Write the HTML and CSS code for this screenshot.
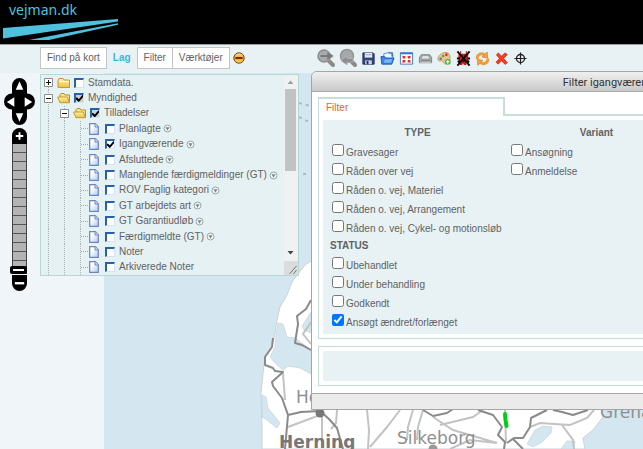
FILE: index.html
```html
<!DOCTYPE html>
<html lang="da">
<head>
<meta charset="utf-8">
<title>vejman.dk</title>
<link rel="stylesheet" href="styles.css">
</head>
<body>
<svg width="0" height="0" class="defs" aria-hidden="true">
  <defs>
    <linearGradient id="gold" x1="0" y1="0" x2="0" y2="1"><stop offset="0" stop-color="#fff3a8"/><stop offset="1" stop-color="#f0c040"/></linearGradient>
    <linearGradient id="page" x1="0" y1="0" x2="1" y2="1"><stop offset="0.3" stop-color="#fff"/><stop offset="1" stop-color="#a9cbf5"/></linearGradient>
    <linearGradient id="amber" x1="0" y1="0" x2="0" y2="1"><stop offset="0" stop-color="#ffe9a0"/><stop offset="0.5" stop-color="#f0a020"/><stop offset="1" stop-color="#ffe070"/></linearGradient>
    <symbol id="folder" viewBox="0 0 14 12"><path d="M1 3.5 2 1.5h4l1 1.5h5.500v7.500H1z" fill="url(#gold)" stroke="#c19a34"/><path d="M2 4.500h10" stroke="#fffbe0"/></symbol>
    <symbol id="folder-open" viewBox="0 0 14 12"><path d="M3 10.500V2.500l1-1h3l1 1.500h4.500v7z" fill="#f8e48c" stroke="#b58d2c"/><path d="M.6 5h9.600l2.300 5.700H3z" fill="url(#gold)" stroke="#c19a34"/></symbol>
    <symbol id="doc" viewBox="0 0 10 12"><path d="M.7.7h5.600l3 3v7.600H.7z" fill="url(#page)" stroke="#7183bd" stroke-width="1.200"/><path d="M6 .8v3.200h3.200" fill="#dce9fb" stroke="#7183bd"/></symbol>
    <symbol id="plus" viewBox="0 0 9 9"><path d="M.5.5h8v8h-8z" fill="#fff" stroke="#8e8e8e"/><path d="M2 4.500h5M4.500 2v5" stroke="#111"/></symbol>
    <symbol id="minus" viewBox="0 0 9 9"><path d="M.5.5h8v8h-8z" fill="#fff" stroke="#8e8e8e"/><path d="M2 4.500h5" stroke="#111"/></symbol>
    <symbol id="drop" viewBox="0 0 9 9"><circle cx="4.500" cy="4.500" r="3.500" fill="#f1f6f6" stroke="#929c9c" stroke-width=".9"/><path d="M2.500 3.200h4L4.500 6.800z" fill="#7d8787"/></symbol>
  </defs>
</svg>

<header class="banner">
  <a class="brand" href="#">vejman.dk</a>
  <svg class="swoosh" viewBox="0 0 116 22" aria-hidden="true"><path d="M0 9 115 0v2.500L0 19.500z" fill="#4fc0de"/><path d="M26 21 115 4.200v1.600L46 21z" fill="#4fc0de"/></svg>
</header>

<div class="toolbar">
  <nav class="tabs">
    <button>Find på kort</button><button class="active">Lag</button><button>Filter</button><button>Værktøjer</button>
  </nav>
  <button class="tool collapse" aria-label="Skjul">
    <svg viewBox="0 0 12 12"><circle cx="6" cy="6" r="5.200" fill="url(#amber)" stroke="#7e3d12"/><path d="M2.500 6h7" stroke="#6b2a08" stroke-width="2"/></svg>
  </button>
  <div class="tools">
    <button class="tool wide" aria-label="Zoom næste"><svg viewBox="0 0 20 20"><circle cx="8" cy="8" r="6" fill="#a9aaab" stroke="#8c8d8e" stroke-width="1.500"/><path d="m12 12 5 5" stroke="#8a8a8a" stroke-width="4" stroke-linecap="round"/><path d="M4 6.500h7V3l6.500 5-6.500 5V9.500H4z" fill="#77797a" stroke="#b5b6b6" stroke-width=".7"/></svg></button>
    <button class="tool wide" aria-label="Zoom forrige"><svg viewBox="0 0 20 20"><circle cx="9" cy="8" r="6.500" fill="#a7a8a9" stroke="#939495" stroke-width="1.500"/><path d="m13 13 4 4" stroke="#8a8a8a" stroke-width="4" stroke-linecap="round"/><path d="M15 10.500H9V8l-6 4.500L9 17v-2.800h6z" fill="#8b8d8e" stroke="#b5b6b6" stroke-width=".7"/></svg></button>
    <button class="tool" aria-label="Gem"><svg viewBox="0 0 16 16"><path d="M2 2h11l1 1v11H2z" fill="#34437d" stroke="#222e5c"/><path d="M4 2h8v5H4z" fill="#e6ebf7"/><path d="M5 4h6" stroke="#8f9bc0"/><path d="M4.500 10h7v4h-7z" fill="#cdd5ea"/><path d="M6 10.500h2V14H6z" fill="#26315f"/></svg></button>
    <button class="tool" aria-label="Åbn"><svg viewBox="0 0 16 16"><path d="m4 3 6-1.500 4 3L13 12H4z" fill="#eef6ff" stroke="#5f8ed0"/><path d="M9 2h4v4" fill="none" stroke="#3a73cd" stroke-width="1.500"/><path d="M1 6h4l1 1.500h9L12.500 14H2z" fill="#3d86ea" stroke="#1857b8"/><path d="m5 9 8-.5-1 4H4z" fill="#79b4fa"/></svg></button>
    <button class="tool" aria-label="Fuldt udsnit"><svg viewBox="0 0 16 16"><path d="M1.500 2h13v12h-13z" fill="#fff" stroke="#3877cd"/><path d="M1.500 2.500h13" stroke="#3877cd" stroke-width="2"/><path d="m3.500 5 3.500.5-.5 2.500H4zM12.500 5 9 5.500 9.500 8H12zM3.500 12.500 7 12l-.5-2.500H4zM12.500 12.500 9 12l.5-2.500H12z" fill="#ef2a20"/></svg></button>
    <button class="tool" aria-label="Udskriv"><svg viewBox="0 0 16 16"><path d="M3.500 4h9l2 3v5.500h-13V7z" fill="#a9acae" stroke="#7d8082"/><path d="M4.500 5h7l1 3.500h-9z" fill="#e6e7e7" stroke="#8b8e90" stroke-width=".7"/><path d="M3 10.500h10" stroke="#707375"/><path d="M2.500 12h11" stroke="#dedede"/></svg></button>
    <button class="tool" aria-label="Farver"><svg viewBox="0 0 16 16"><path d="M9.500 1.500C5 1.500 1 5 1 8.500c0 2.500 2.500 2.500 4 2 2 0 1 3 4 3.500 3 0 5-3 5-7 0-3-1.500-5.500-4.500-5.500z" fill="#e8c48d" stroke="#b88c50" stroke-width=".8"/><circle cx="10" cy="4" r="1.500" fill="#d83b30"/><circle cx="6.500" cy="5.300" r="1.300" fill="#59a33c"/><circle cx="4" cy="8.200" r="1.300" fill="#4c7bc8"/><circle cx="11.500" cy="11.500" r="3.500" fill="#55a23b" stroke="#fff" stroke-width=".5"/><path d="M11.500 9.500v4M9.500 11.500h4" stroke="#fff" stroke-width="1.200"/></svg></button>
    <button class="tool" aria-label="Ryd kort"><svg viewBox="0 0 16 18"><path d="M5 1v4M11 1v4" stroke="#ba1717"/><path d="M3 4h10v6l-2 3v3H8.500l-1-2-1 2H4v-4L2 9z" fill="#d81818"/><path d="M5 5h2v2H5zM9 5h2v2H9zM7 9h2v4H7z" fill="#4d0808"/><path d="m1.500 1.500 13 15M14.500 1.500l-13 15M1 9h3M12 9h3M2 13l2-2M14 13l-2-2" stroke="#0a0a0a" stroke-width="2"/></svg></button>
    <button class="tool" aria-label="Opdater"><svg viewBox="0 0 16 16"><path d="M2.500 8.500C1.500 4 6.500 1.500 10 4" fill="none" stroke="#f39b35" stroke-width="3"/><path d="M7.500 6.500 13.500 7.500 13 1z" fill="#f5a23b" stroke="#c96f12" stroke-width=".6"/><path d="M13.500 8c1 4.500-4 7-7.500 4.500" fill="none" stroke="#f39b35" stroke-width="3"/><path d="M8.500 10 2.500 8.800 3 15.400z" fill="#f5a23b" stroke="#c96f12" stroke-width=".6"/></svg></button>
    <button class="tool" aria-label="Slet"><svg viewBox="0 0 16 16"><path d="m2.500 4 2.200-2L8 5.500 11.800 2l2.400 1.800L10.300 8l4 4.500-2.500 1.800L8 10.500 4.500 14l-2.400-2L5.800 8z" fill="#f33c22" stroke="#c7210e" stroke-width=".7"/></svg></button>
    <button class="tool" aria-label="Find position"><svg viewBox="0 0 16 16"><circle cx="8" cy="8" r="4.300" fill="none" stroke="#222" stroke-width="1.400"/><path d="M8 1.500v13M1.500 8h13" stroke="#222" stroke-width="1.300"/></svg></button>
  </div>
</div>

<main class="map">
  <svg class="canvas" viewBox="0 73 643 376" preserveAspectRatio="xMinYMin slice" role="img" aria-label="Kort">
    <path d="M0 73h643v376H0z" fill="#d4e6f0"/>
    <path d="M0 73h104v376H0z" fill="#eff5f8"/>
    <g stroke="#aeb9c4" stroke-width="2" stroke-dasharray="3 4"><path d="m299 103 12 3M299 117l12 6M303 174h5"/></g>
    <path d="M311 261 305 265 297 275 292 282 287 295 280 307 277 320 275 333 272 347 265 357 263 373 261 393 262 427 262 449H585L583 438 593 430 603 417 602 405H643V262z" fill="#fff" stroke="#c9d3da"/>
    <g fill="#d4e6f0" stroke="#cbd6dd" stroke-width=".8">
      <path d="m278 323 5 1 4 13 8 1 16 12v24l-11-6-12-2-5 4-8-7-5-6 5-10 1-12z"/>
      <path d="m262 395 4 2 2 11 12 15-3 5-10-8-5-3z"/>
      <path d="m535 430 8-4 9 1-1 6-9 9-9 5-6-3z"/>
      <path d="m561 449 6-8 8 0-1 8zM311 312l-5 8-4 6 2 4 7 3z"/>
    </g>
    <g fill="none" stroke="#c3c3c3" stroke-width="2">
      <path d="M283 373 285 400M288 427 320 415M322 416V440M337 410 336 423 331 429M367 410 369 430 368 449M370 447 387 427 400 410M413 410 408 427 407 440M423 410 418 427 417 440M433 417 453 430 497 443M440 425 473 417 483 410M530 427 540 423 570 425 587 418 594 410M562 425 573 440 574 449M505 410 506 443M497 443 470 440 450 449M311 322 303 334 311 344"/>
    </g>
    <g fill="none" stroke="#8a8a8a" stroke-width="2" stroke-linejoin="round">
      <path d="M311 300 306 309 297 316 298 324 295 343 302 345 311 350M273 338 272 347 265 357 265 365 273 368 275 371 283 372 272 382 273 386 282 398 288 415 285 449M288 415 301 412 320 411 329 419 337 428 343 449M423 410 433 416 447 413 453 409M478 410 493 415 502 427 498 435 505 442 504 449M507 443 514 438 523 438 530 427 531 418 547 410M553 410 562 412 573 415 588 410M513 439 523 449"/>
    </g>
    <circle cx="320" cy="413" r="4.500" fill="#777"/><circle cx="433" cy="449" r="4.500" fill="#999"/>
    <path d="m505 414 .5 6 1 6" fill="none" stroke="#00cf13" stroke-width="4" stroke-linecap="round"/>
    <g class="places"><text x="296" y="403">Holstebro</text><text x="397" y="444">Silkeborg</text><text x="600" y="418">Grenaa</text><text class="city" x="279" y="448">Herning</text></g>
  </svg>

  <div class="nav-control">
    <div class="pan">
      <svg class="pan-shape" viewBox="0 0 31 47" aria-hidden="true"><path d="M8 8a7.500 8 0 0 1 15 0v7.500a8 8 0 0 1 0 16V39a7.500 8 0 0 1-15 0v-7.500a8 8 0 0 1 0-16z"/></svg>
      <button class="up" aria-label="Op"><svg viewBox="0 0 16 16"><path d="m8 3 4 9H4z"/></svg></button>
      <button aria-label="Venstre"><svg viewBox="0 0 16 16"><path d="m3 8 8-5v10z"/></svg></button>
      <button aria-label="Højre"><svg viewBox="0 0 16 16"><path d="m13 8-8-5v10z"/></svg></button>
      <button class="down" aria-label="Ned"><svg viewBox="0 0 16 16"><path d="m8 13 4-9H4z"/></svg></button>
    </div>
    <div class="zoom">
      <button class="zoom-in" aria-label="Zoom ind"><svg viewBox="0 0 16 16"><path d="M7 4h2v3h3v2H9v3H7V9H4V7h3z"/></svg></button>
      <input type="range" min="0" max="13" value="13" aria-label="Zoomniveau">
      <button class="zoom-out" aria-label="Zoom ud"><svg viewBox="0 0 16 16"><path d="M3 7h10v2.500H3z"/></svg></button>
    </div>
  </div>

  <section class="layers" aria-label="Lag">
    <ul class="tree">
      <li><i class="guide end"><svg><use href="#plus"/></svg></i><svg class="folder"><use href="#folder"/></svg><label><input type="checkbox">Stamdata.</label></li>
      <li><i class="guide"><svg><use href="#minus"/></svg></i><svg class="folder"><use href="#folder-open"/></svg><label><input type="checkbox" class="partial" checked>Myndighed</label></li>
      <li><i class="guide"></i><i class="guide"><svg><use href="#minus"/></svg></i><svg class="folder"><use href="#folder-open"/></svg><label><input type="checkbox" class="partial" checked>Tilladelser</label></li>
      <li><i class="guide"></i><i class="guide"></i><i class="guide branch"></i><svg class="doc"><use href="#doc"/></svg><label><input type="checkbox">Planlagte</label><svg class="drop"><use href="#drop"/></svg></li>
      <li><i class="guide"></i><i class="guide"></i><i class="guide branch"></i><svg class="doc"><use href="#doc"/></svg><label><input type="checkbox" checked>Igangværende</label><svg class="drop"><use href="#drop"/></svg></li>
      <li><i class="guide"></i><i class="guide"></i><i class="guide branch"></i><svg class="doc"><use href="#doc"/></svg><label><input type="checkbox">Afsluttede</label><svg class="drop"><use href="#drop"/></svg></li>
      <li><i class="guide"></i><i class="guide"></i><i class="guide branch"></i><svg class="doc"><use href="#doc"/></svg><label><input type="checkbox">Manglende færdigmeldinger (GT)</label><svg class="drop"><use href="#drop"/></svg></li>
      <li><i class="guide"></i><i class="guide"></i><i class="guide branch"></i><svg class="doc"><use href="#doc"/></svg><label><input type="checkbox">ROV Faglig kategori</label><svg class="drop"><use href="#drop"/></svg></li>
      <li><i class="guide"></i><i class="guide"></i><i class="guide branch"></i><svg class="doc"><use href="#doc"/></svg><label><input type="checkbox">GT arbejdets art</label><svg class="drop"><use href="#drop"/></svg></li>
      <li><i class="guide"></i><i class="guide"></i><i class="guide branch"></i><svg class="doc"><use href="#doc"/></svg><label><input type="checkbox">GT Garantiudløb</label><svg class="drop"><use href="#drop"/></svg></li>
      <li><i class="guide"></i><i class="guide"></i><i class="guide branch"></i><svg class="doc"><use href="#doc"/></svg><label><input type="checkbox">Færdigmeldte (GT)</label><svg class="drop"><use href="#drop"/></svg></li>
      <li><i class="guide"></i><i class="guide"></i><i class="guide branch"></i><svg class="doc"><use href="#doc"/></svg><label><input type="checkbox">Noter</label></li>
      <li><i class="guide"></i><i class="guide"></i><i class="guide branch"></i><svg class="doc"><use href="#doc"/></svg><label><input type="checkbox">Arkiverede Noter</label></li>
    </ul>
    <div class="scrollbar" aria-hidden="true">
      <svg class="arrow" viewBox="0 0 13 14"><path d="m3.500 9 3-3.500 3 3.500z" fill="#a0a0a0"/></svg>
      <div class="thumb"></div>
      <svg class="arrow last" viewBox="0 0 13 14"><path d="m3.500 4 3 3.500 3-3.500z" fill="#444"/></svg>
      <svg class="grip" viewBox="0 0 13 14"><path d="m5 13 7-8M9 13l3-4" stroke="#777" fill="none"/></svg>
    </div>
  </section>

  <section class="dialog" role="dialog" aria-labelledby="dialog-title">
    <h2 id="dialog-title">Filter igangværende</h2>
    <div class="dialog-body">
      <div class="tab-row"><button class="dialog-tab">Filter</button></div>
      <div class="pane joined">
        <div class="fields">
          <div class="column">
            <h3 class="centered">TYPE</h3>
            <label><input type="checkbox">Gravesager</label>
            <label><input type="checkbox">Råden over vej</label>
            <label><input type="checkbox">Råden o. vej, Materiel</label>
            <label><input type="checkbox">Råden o. vej, Arrangement</label>
            <label><input type="checkbox">Råden o. vej, Cykel- og motionsløb</label>
            <h3 class="group">STATUS</h3>
            <label><input type="checkbox">Ubehandlet</label>
            <label><input type="checkbox">Under behandling</label>
            <label><input type="checkbox">Godkendt</label>
            <label><input type="checkbox" checked>Ansøgt ændret/forlænget</label>
          </div>
          <div class="column">
            <h3 class="centered">Variant</h3>
            <label><input type="checkbox">Ansøgning</label>
            <label><input type="checkbox">Anmeldelse</label>
          </div>
        </div>
      </div>
      <div class="pane actions"><div class="empty"></div></div>
    </div>
    <div class="dialog-foot"></div>
  </section>
</main>
</body>
</html>
```
FILE: styles.css
```css
* { box-sizing: border-box; }

html, body { margin: 0; height: 100%; overflow: hidden; }

body {
  display: flex;
  flex-direction: column;
  background: #e8f2f5;
  color: #5f6363;
  font: 10px/14px "Liberation Sans", Arial, sans-serif;
}

button {
  margin: 0;
  padding: 0;
  border: 0;
  background: none;
  color: inherit;
  font: inherit;
}

svg { display: block; flex: none; }
.defs { position: absolute; }

/* Banner */
.banner {
  flex: none;
  height: 45px;
  background: #000;
  border-bottom: 1px solid #999;
}
.brand {
  display: block;
  height: 19px;
  padding-left: 9px;
  color: #4fc0de;
  font: 14px/19px "Noto Sans", sans-serif;
  text-decoration: none;
}
.swoosh { width: 116px; height: 22px; margin-left: 3px; }

/* Toolbar */
.toolbar {
  flex: none;
  display: flex;
  height: 28px;
  padding: 2px 0 4px 40px;
}
.tabs { display: flex; }
.tabs button {
  height: 22px;
  padding: 0 6px;
  border: 1px solid #bfc5c8;
  border-left-width: 0;
  background: #fff;
}
.tabs button:first-child { border-left-width: 1px; }
.tabs .active {
  border-color: transparent #bfc5c8 transparent transparent;
  background: none;
  color: #3fb5d8;
  font-weight: bold;
}
.tool { display: flex; align-items: center; justify-content: center; width: 19px; }
.tool svg { width: 15px; height: 17px; }
.tools .wide { width: 22px; }
.wide svg { width: 20px; height: 20px; }
.collapse svg { width: 12px; height: 12px; }
.tools { position: absolute; left: 315px; display: flex; height: 22px; }

/* Map */
.map { position: relative; flex: 1; }
.canvas { position: absolute; width: 100%; height: 100%; }
.places { fill: #8d9092; font: 17px "DejaVu Sans", sans-serif; }
.places .city { fill: #777; font-weight: bold; }

/* Pan and zoom */
.nav-control { position: absolute; top: 5px; left: 4px; width: 31px; }
.pan {
  position: relative;
  display: grid;
  grid-template: 16px 15px 16px / 1fr 1fr;
  justify-items: center;
}
.pan-shape { position: absolute; width: 31px; height: 47px; }
.pan button, .zoom button { position: relative; width: 15px; height: 16px; }
.pan button svg, .zoom button svg { width: 15px; height: 16px; fill: #fff; }
.pan .up, .pan .down { grid-column: 1 / 3; }
.zoom {
  display: flex;
  flex-direction: column;
  align-items: center;
  margin-top: 3px;
}
.zoom button { background: #000; }
.zoom .zoom-in { border-radius: 8px 8px 0 0; }
.zoom .zoom-out { margin-top: 1px; border-radius: 0 0 8px 8px; }
.zoom input {
  appearance: none;
  writing-mode: vertical-lr;
  width: 15px;
  height: 130px;
  margin: 0;
  border: 1px solid #444;
  border-width: 0 1px;
  background: repeating-linear-gradient(#b3b5b5 0 8px, #555 8px 9px);
}
.zoom input::-webkit-slider-thumb {
  appearance: none;
  width: 17px;
  height: 8px;
  margin-left: -2px;
  border: 3px solid #000;
  border-radius: 2px;
  background: #fff;
}

/* Layer tree */
.layers {
  position: absolute;
  top: 1px;
  left: 40px;
  display: flex;
  width: 259px;
  height: 202px;
  border: 1px solid #b5d8d4;
  background: #e6f1f3;
}
.tree {
  flex: 1;
  display: flex;
  flex-direction: column;
  margin: 0;
  padding: 0;
  list-style: none;
}
.tree li { flex: 1; display: flex; align-items: center; min-height: 0; }
.tree label { display: flex; align-items: center; margin-right: 2px; white-space: nowrap; }
.guide {
  position: relative;
  display: flex;
  align-items: center;
  align-self: stretch;
  width: 16px;
  background: repeating-linear-gradient(#aab4b6 0 1px, transparent 1px 2px) 7px 0 / 1px 100% no-repeat;
}
.guide.end { background-size: 1px 50%; background-position: 7px 100%; }
.guide svg { width: 9px; height: 9px; margin-left: 3px; }
.branch::after {
  content: "";
  width: 7px;
  margin-left: 8px;
  border-top: 1px dotted #a0aaac;
}
.folder { width: 14px; height: 12px; margin-right: 2px; }
.doc { width: 10px; height: 12px; margin-right: 5px; }
.drop { width: 9px; height: 9px; }
.tree input {
  appearance: none;
  display: grid;
  place-items: center;
  width: 10px;
  height: 10px;
  margin: 0 4px 0 1px;
  border: 1px solid #d3e2f6;
  border-top: 2px solid #2463ac;
  border-left: 2px solid #2463ac;
  background: #fff;
}
.tree input.partial { background: #ccd0d2; }
.tree input:checked::before {
  content: "";
  width: 7px;
  height: 7px;
  background: #000;
  clip-path: polygon(0 35%, 18% 35%, 40% 58%, 90% 0, 100% 0, 100% 30%, 40% 100%, 0 62%);
}
.scrollbar { display: flex; flex-direction: column; width: 14px; background: #f0f1f2; }
.arrow { width: 13px; height: 14px; }
.thumb { height: 82px; margin: 0 2px 0 1px; background: #c1c2c3; }
.arrow.last { margin-top: auto; }
.grip { width: 14px; height: 14px; background: #dadcdd; }

/* Filter dialog */
.dialog {
  position: absolute;
  top: -2px;
  left: 311px;
  width: 600px;
  border: 1px solid #a5a5a5;
  border-radius: 6px 6px 0 0;
  background: #fff;
  overflow: hidden;
}
.dialog h2 {
  height: 20px;
  margin: 0;
  border-bottom: 1px solid #a9a9a9;
  background: linear-gradient(#f0f0f0, #c9c9c9);
  color: #333;
  font: 11px/22px Roboto, sans-serif;
  text-align: center;
}
.dialog-body { padding: 5px 6px 7px; }
.tab-row { display: flex; height: 19px; }
.tab-row::after { content: ""; flex: 1; border-bottom: 2px solid #c6dedc; }
.dialog-tab {
  width: 187px;
  padding-left: 7px;
  border: solid #c6dedc;
  border-width: 2px 2px 0 1px;
  color: #ee6030;
  text-align: left;
}
.pane { padding: 4px; border: 1px solid #c0dcd9; }
.pane.joined { border-top: 0; }
.pane.actions { margin-top: 7px; }
.empty { height: 30px; background: #e8f1f4; }
.fields {
  display: grid;
  grid-template-columns: 175px 175px;
  gap: 4px;
  padding: 4px 7px;
  background: #e8f1f4;
}
.fields h3 { height: 17px; margin: 0; font: bold 10px/17px "Liberation Sans", Arial, sans-serif; }
.fields .group { margin-top: 1px; }
.fields .centered { text-align: center; }
.fields label { display: flex; align-items: flex-end; height: 19px; white-space: nowrap; }
.fields input { width: 12px; height: 12px; margin: 0 2px 4px; }
.dialog-foot { height: 16px; border-top: 1px solid #a9a9a9; background: #ebebeb; }
```
